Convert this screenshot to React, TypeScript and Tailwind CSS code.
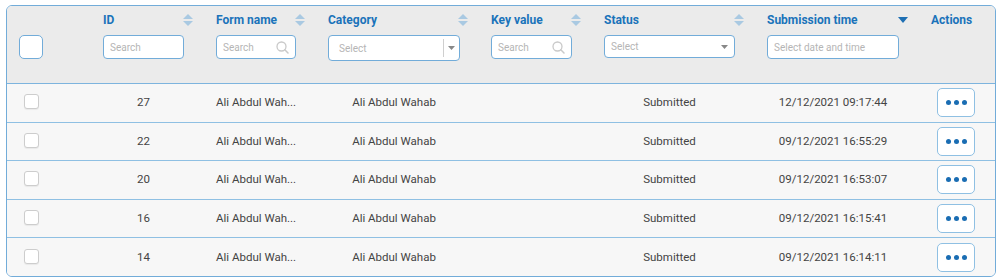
import React from "react";

type Row = { id: number; name: string; category: string; status: string; time: string };

const rows: Row[] = [
  { id: 27, name: "Ali Abdul Wah...", category: "Ali Abdul Wahab", status: "Submitted", time: "12/12/2021 09:17:44" },
  { id: 22, name: "Ali Abdul Wah...", category: "Ali Abdul Wahab", status: "Submitted", time: "09/12/2021 16:55:29" },
  { id: 20, name: "Ali Abdul Wah...", category: "Ali Abdul Wahab", status: "Submitted", time: "09/12/2021 16:53:07" },
  { id: 16, name: "Ali Abdul Wah...", category: "Ali Abdul Wahab", status: "Submitted", time: "09/12/2021 16:15:41" },
  { id: 14, name: "Ali Abdul Wah...", category: "Ali Abdul Wahab", status: "Submitted", time: "09/12/2021 16:14:11" },
];

const cols = "grid grid-cols-[96px_113px_112px_163px_113px_163px_164px_1fr]";

function SortIcon() {
  return (
    <svg width="10" height="12" viewBox="0 0 10 12" className="shrink-0">
      <path d="M5 0 L10 5 L0 5 Z" fill="#a9c9e2" />
      <path d="M5 12 L10 7 L0 7 Z" fill="#a9c9e2" />
    </svg>
  );
}

function SortDown() {
  return (
    <svg width="10" height="6" viewBox="0 0 10 6" className="shrink-0">
      <path d="M0 0 L10 0 L5 6 Z" fill="#1e6fb3" />
    </svg>
  );
}

function SearchGlyph() {
  return (
    <svg width="13" height="13" viewBox="0 0 13 13" className="shrink-0">
      <circle cx="5.5" cy="5.5" r="4.5" fill="none" stroke="#c9c9c9" strokeWidth="1.3" />
      <path d="M8.8 8.8 L12 12" stroke="#c9c9c9" strokeWidth="1.5" strokeLinecap="round" />
    </svg>
  );
}

function Caret() {
  return (
    <svg width="7" height="4" viewBox="0 0 7 4" className="shrink-0">
      <path d="M0 0 L7 0 L3.5 4 Z" fill="#888" />
    </svg>
  );
}

function HeadCell({
  label,
  width,
  sort = "both",
  children,
}: {
  label: string;
  width: string;
  sort?: "both" | "down" | "none";
  children?: React.ReactNode;
}) {
  return (
    <div className="flex flex-col pt-[6px]">
      <div className={`flex h-[16px] items-center justify-between ${width}`}>
        <span className="text-[12px] font-bold text-[#1a73ba]">{label}</span>
        {sort === "both" && <SortIcon />}
        {sort === "down" && <SortDown />}
      </div>
      <div className="mt-[7px]">{children}</div>
    </div>
  );
}

export default function App() {
  return (
    <div className="h-[278px] w-[999px] bg-white pt-[5px] font-['Roboto',sans-serif]">
      <div className="ml-[6px] flex h-[272px] w-[990px] flex-col overflow-hidden rounded-[6px] border border-[#72acd9]">
        {/* header */}
        <div className={`${cols} h-[78px] shrink-0 border-b border-[#7db4de] bg-[#ebebeb]`}>
          <div className="flex items-start pl-[12px] pt-[29px]">
            <div className="h-[24px] w-[24px] rounded-[5px] border border-[#72acd9] bg-white" />
          </div>
          <HeadCell label="ID" width="w-[90px]">
            <div className="flex h-[24px] w-[81px] items-center rounded-[4px] border border-[#72acd9] bg-white px-[6px] text-[10px] text-[#b5b5b5]">
              Search
            </div>
          </HeadCell>
          <HeadCell label="Form name" width="w-[89px]">
            <div className="flex h-[24px] w-[80px] items-center justify-between rounded-[4px] border border-[#72acd9] bg-white pl-[6px] pr-[6px] text-[10px] text-[#b5b5b5]">
              Search
              <SearchGlyph />
            </div>
          </HeadCell>
          <HeadCell label="Category" width="w-[140px]">
            <div className="flex h-[26px] w-[132px] items-center rounded-[4px] border border-[#72acd9] bg-white pl-[10px] text-[10px] text-[#b5b5b5]">
              <span className="flex-1">Select</span>
              <span className="h-[18px] w-px bg-[#cfcfcf]" />
              <span className="flex w-[15px] justify-center">
                <Caret />
              </span>
            </div>
          </HeadCell>
          <HeadCell label="Key value" width="w-[90px]">
            <div className="flex h-[24px] w-[81px] items-center justify-between rounded-[4px] border border-[#72acd9] bg-white pl-[6px] pr-[6px] text-[10px] text-[#b5b5b5]">
              Search
              <SearchGlyph />
            </div>
          </HeadCell>
          <HeadCell label="Status" width="w-[140px]">
            <div className="flex h-[23px] w-[131px] items-center justify-between rounded-[4px] border border-[#72acd9] bg-white pl-[6px] pr-[6px] text-[10px] text-[#b5b5b5]">
              Select
              <Caret />
            </div>
          </HeadCell>
          <HeadCell label="Submission time" width="w-[141px]" sort="down">
            <div className="flex h-[24px] w-[132px] items-center rounded-[4px] border border-[#72acd9] bg-white px-[6px] text-[10px] text-[#b5b5b5]">
              Select date and time
            </div>
          </HeadCell>
          <HeadCell label="Actions" width="w-[50px]" sort="none" />
        </div>

        {/* body */}
        <div className="flex flex-1 flex-col">
          {rows.map((r, i) => (
            <div
              key={r.id}
              className={`${cols} flex-1 items-center bg-[#f7f7f7] text-[11.5px] text-[#444] ${
                i > 0 ? "border-t border-[#8fc0e3]" : ""
              }`}
            >
              <div className="pl-[17px]">
                <div className="mb-[2px] h-[15px] w-[15px] rounded-[3px] border border-[#cdcdcd] bg-white shadow-[0_1px_1px_rgba(0,0,0,0.06)]" />
              </div>
              <div className="w-[81px] text-center">{r.id}</div>
              <div className="w-[80px] whitespace-nowrap">{r.name}</div>
              <div className="w-[132px] text-center">{r.category}</div>
              <div className="w-[81px]" />
              <div className="w-[131px] text-center">{r.status}</div>
              <div className="w-[132px] text-center">{r.time}</div>
              <div className="pl-[6px]">
                <button className="flex h-[29px] w-[38px] items-center justify-center gap-[3px] rounded-[5px] border border-[#8fc0e3] bg-white">
                  <span className="h-[5px] w-[5px] rounded-full bg-[#1a6db3]" />
                  <span className="h-[5px] w-[5px] rounded-full bg-[#1a6db3]" />
                  <span className="h-[5px] w-[5px] rounded-full bg-[#1a6db3]" />
                </button>
              </div>
            </div>
          ))}
        </div>
      </div>
    </div>
  );
}
